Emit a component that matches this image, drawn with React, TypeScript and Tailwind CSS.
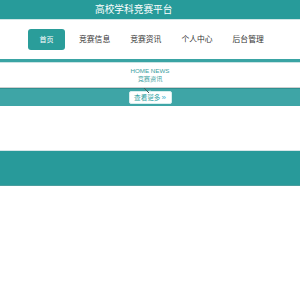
import React from 'react';

const navItems = ['竞赛信息', '竞赛资讯', '个人中心', '后台管理'];

export default function App() {
  return (
    <div
      className="w-[300px] h-[300px] bg-white overflow-hidden"
      style={{ fontFamily: '"Liberation Sans", "Noto Sans CJK SC", sans-serif' }}
    >
      {/* top title bar */}
      <header className="h-[19px] bg-[#279b9a] flex items-center pl-[95px]">
        <h1 className="text-[9.7px] leading-none text-white">高校学科竞赛平台</h1>
      </header>
      <div className="h-[1px] bg-[#cfe6e6]" />

      {/* nav */}
      <nav className="h-[39px] flex items-center pl-[28px]">
        <button className="w-[37px] h-[21px] rounded-[3px] bg-[#2a9d9a] text-white text-[7px] leading-none">
          首页
        </button>
        <ul className="flex items-center ml-[14px] gap-[20px]">
          {navItems.map((item) => (
            <li key={item} className="text-[7.8px] leading-none text-[#333]">
              {item}
            </li>
          ))}
        </ul>
      </nav>
      <div className="h-[3px] bg-[#3aa4a4]" />
      <div className="h-[1px] bg-[#c9e3e3]" />

      {/* news heading */}
      <section className="h-[24px] flex flex-col items-center justify-center">
        <p className="text-[6.2px] leading-[8px] text-[#3a9ea0]">HOME NEWS</p>
        <p className="text-[6.2px] leading-[8px] text-[#3a9ea0]">竞赛资讯</p>
      </section>
      <div className="h-[1px] bg-[#cfcfcf]" />
      <div className="h-[1px] bg-[#2f8f90]" />

      {/* more bar */}
      <div className="h-[17px] bg-[#3ea5a6] flex items-center justify-center">
        <div className="relative w-[43px] h-[13px]">
          <button className="block w-[43px] h-[13px] bg-white rounded-[2px] border border-[#d6eeee] text-[6.6px] leading-none text-[#2b9ea0]">
            查看更多<span className="ml-[1px] text-[8px] text-[#3cb4d0]">»</span>
          </button>
          <svg
            className="absolute left-[14px] top-[-4px]"
            width="12"
            height="14"
            viewBox="0 0 12 14"
          >
            <line x1="1" y1="1" x2="6" y2="6" stroke="#4a5a5a" strokeWidth="1" />
            <line x1="7" y1="3" x2="7" y2="13" stroke="#e8f4f4" strokeWidth="0.8" opacity="0.8" />
            <line x1="3" y1="9" x2="11" y2="9" stroke="#e8f4f4" strokeWidth="0.8" opacity="0.7" />
            <line x1="4" y1="12" x2="10" y2="6" stroke="#e8f4f4" strokeWidth="0.8" opacity="0.6" />
          </svg>
        </div>
      </div>

      <div className="h-[44px]" />

      {/* footer band */}
      <div className="h-[1px] bg-[#d6e6e8]" />
      <footer className="h-[34px] bg-[#289a9a]" />
      <div className="h-[1px] bg-[#4a9e9e]" />
    </div>
  );
}
